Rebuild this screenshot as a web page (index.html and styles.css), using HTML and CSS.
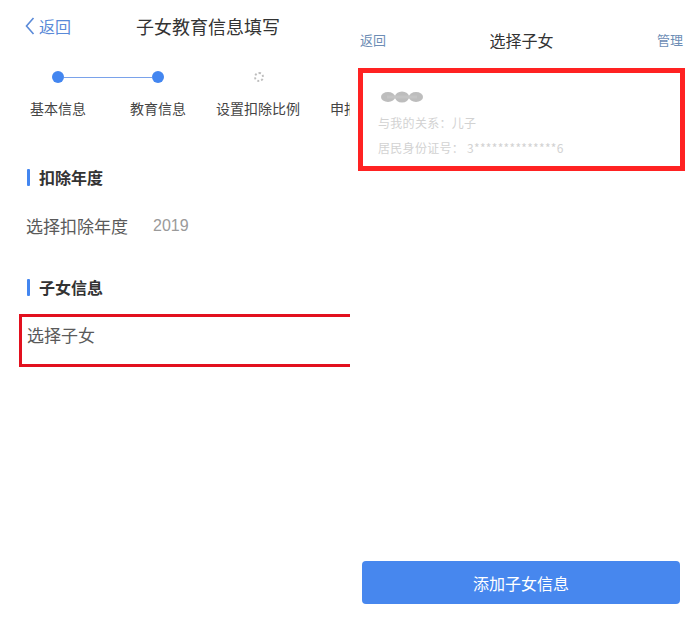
FILE: index.html
```html
<!DOCTYPE html>
<html lang="zh">
<head>
<meta charset="utf-8">
<title>子女教育信息填写</title>
<link rel="stylesheet" href="styles.css">
</head>
<body>
<div class="page">
  <section class="left">
    <div class="left-inner">
      <header class="nav">
        <a class="back">
          <svg class="chev" width="10" height="18" viewBox="0 0 10 18"><path d="M8.5 1 L1.5 9 L8.5 17" fill="none" stroke="#5a8ad8" stroke-width="1.6"/></svg>
          <span>返回</span>
        </a>
        <h1 class="title">子女教育信息填写</h1>
        <span></span>
      </header>

      <div class="track">
        <span class="dot"></span>
        <span class="line"></span>
        <span class="dot"></span>
        <span class="gap"></span>
        <span class="dot-todo"></span>
      </div>
      <div class="labels">
        <span>基本信息</span>
        <span>教育信息</span>
        <span>设置扣除比例</span>
        <span>申报信息</span>
      </div>

      <h2 class="sec sec-first">扣除年度</h2>
      <div class="row"><span class="row-label">选择扣除年度</span><span class="row-value">2019</span></div>

      <h2 class="sec sec-second">子女信息</h2>
      <div class="pick-box"><span class="row-label">选择子女</span></div>
    </div>
  </section>

  <section class="right">
    <header class="nav2">
      <a class="link">返回</a>
      <h1 class="title2">选择子女</h1>
      <a class="link link-right">管理</a>
    </header>

    <div class="child-card">
      <svg class="blur-name" width="42" height="12" viewBox="0 0 42 12">
        <ellipse cx="7" cy="6" rx="7" ry="5" fill="#bdbdbd"/>
        <ellipse cx="21" cy="6" rx="7" ry="5.5" fill="#bdbdbd"/>
        <ellipse cx="35" cy="6" rx="7" ry="5" fill="#bdbdbd"/>
        <rect x="6" y="4.5" width="30" height="3" fill="#c4c4c4"/>
      </svg>
      <p class="meta meta1">与我的关系：儿子</p>
      <p class="meta meta2">居民身份证号：&nbsp;3**************6</p>
    </div>

    <button class="add-btn">添加子女信息</button>
  </section>
</div>
</body>
</html>
```

FILE: styles.css
```css
* { box-sizing: border-box; margin: 0; padding: 0; }

body {
  font-family: "Noto Sans CJK SC", "Noto Sans", sans-serif;
  background: #fff;
  color: #333;
}

.page {
  display: flex;
  width: 694px;
  height: 620px;
}

.left {
  width: 350px;
  height: 620px;
  overflow: hidden;
  flex: none;
}

.left-inner {
  width: 416px;
}

.nav {
  display: grid;
  grid-template-columns: 1fr auto 1fr;
  align-items: center;
  height: 52px;
}

.back {
  display: flex;
  align-items: center;
  gap: 4px;
  padding-left: 25px;
  color: #5a8ad8;
  font-size: 16px;
  line-height: 24px;
}

.chev { display: block; }

.title {
  font-size: 18px;
  font-weight: 400;
  color: #333;
  line-height: 26px;
}

.track {
  display: flex;
  align-items: center;
  height: 12px;
  margin-top: 19px;
  padding-left: 52px;
}

.dot {
  width: 12px;
  height: 12px;
  border-radius: 50%;
  background: #4386f0;
  flex: none;
}

.line {
  width: 88px;
  height: 1px;
  background: #7aa2ea;
  flex: none;
}

.gap { width: 90px; flex: none; }

.dot-todo {
  width: 10px;
  height: 10px;
  border-radius: 50%;
  border: 2px dotted #bdbdbd;
  flex: none;
}

.labels {
  display: grid;
  grid-template-columns: repeat(4, 100px);
  padding-left: 8px;
  margin-top: 15px;
  font-size: 14px;
  line-height: 20px;
  color: #444;
  text-align: center;
  white-space: nowrap;
}

.sec {
  display: flex;
  align-items: center;
  font-size: 16px;
  font-weight: 700;
  color: #333;
  line-height: 24px;
  padding-left: 27px;
}

.sec::before {
  content: "";
  width: 3px;
  height: 17px;
  background: #4386f0;
  border-radius: 1px;
  margin-right: 9px;
}

.sec-first { margin-top: 47px; }
.sec-second { margin-top: 37px; }

.row {
  display: flex;
  align-items: center;
  margin-top: 25px;
  padding-left: 26px;
  line-height: 24px;
}

.row-label {
  font-size: 17px;
  color: #5a5a5a;
}

.row-value {
  font-size: 16px;
  color: #9a9a9a;
  margin-left: 25px;
  font-family: "Liberation Sans", "Noto Sans", sans-serif;
}

.pick-box {
  margin-top: 15px;
  margin-left: 19px;
  width: 400px;
  height: 53px;
  border: 3px solid #e2101e;
  padding: 6px 0 0 5px;
  line-height: 24px;
}

.right {
  width: 344px;
  height: 620px;
  display: flex;
  flex-direction: column;
  flex: none;
}

.nav2 {
  display: grid;
  grid-template-columns: 1fr auto 1fr;
  align-items: center;
  padding: 28px 11px 0 10px;
  line-height: 24px;
}

.link {
  font-size: 13px;
  color: #6d8db5;
}

.link-right { justify-self: end; }

.title2 {
  font-size: 16px;
  font-weight: 400;
  color: #333;
}

.child-card {
  margin: 16px 9px 0 8px;
  height: 103px;
  border: 5px solid #ff2222;
  padding: 18px 0 0 15px;
}

.blur-name {
  display: block;
  margin-left: 3px;
  width: 42px;
  height: 12px;
}

.meta {
  font-size: 12px;
  line-height: 16px;
  color: #d2d2d2;
  letter-spacing: 0.3px;
}

.meta1 { margin-top: 12px; }
.meta2 { margin-top: 9px; }

.add-btn {
  margin: auto 14px 16px 12px;
  height: 43px;
  border: none;
  border-radius: 4px;
  background: #4787ee;
  color: #fff;
  font-family: "Noto Sans CJK SC", "Noto Sans", sans-serif;
  font-size: 16px;
}
```
